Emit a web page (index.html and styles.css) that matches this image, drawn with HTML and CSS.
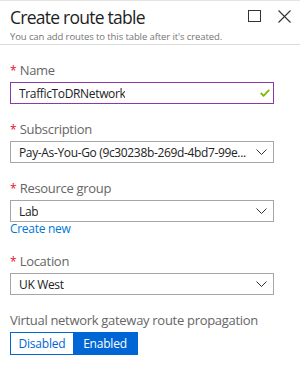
FILE: index.html
```html
<!DOCTYPE html>
<html lang="en">
<head>
  <meta charset="UTF-8">
  <meta name="viewport" content="width=device-width, initial-scale=1.0">
  <title>Create route table</title>
  <link rel="stylesheet" href="styles.css">
</head>
<body>
  <div class="blade">
    <div class="header">
      <div class="titles">
        <h2>Create route table</h2>
        <div class="subtitle">You can add routes to this table after it's created.</div>
      </div>
      <div class="actions">
        <svg width="13" height="12" viewBox="0 0 13 12"><rect x="0.5" y="0.5" width="12" height="11" fill="none" stroke="#333" stroke-width="1"/></svg>
        <svg width="13" height="13" viewBox="0 0 13 13"><path d="M0.5 0.5 L12.5 12.5 M12.5 0.5 L0.5 12.5" stroke="#333" stroke-width="1.1" fill="none"/></svg>
      </div>
    </div>

    <div class="form">
      <div class="field">
        <label><span class="req">*</span> Name</label>
        <div class="box active">
          <span class="val">TrafficToDRNetwork</span>
          <svg class="check" width="10" height="8" viewBox="0 0 10 8"><path d="M0.8 4 L3.6 6.8 L9.2 0.8" stroke="#7fba00" stroke-width="1.8" fill="none"/></svg>
        </div>
      </div>

      <div class="field">
        <label><span class="req">*</span> Subscription</label>
        <div class="box">
          <span class="val">Pay-As-You-Go (9c30238b-269d-4bd7-99e...</span>
          <svg class="chev" width="11" height="6" viewBox="0 0 11 6"><path d="M0.5 0.5 L5.5 5.5 L10.5 0.5" stroke="#333" stroke-width="1" fill="none"/></svg>
        </div>
      </div>

      <div class="field">
        <label><span class="req">*</span> Resource group</label>
        <div class="box">
          <span class="val">Lab</span>
          <svg class="chev" width="11" height="6" viewBox="0 0 11 6"><path d="M0.5 0.5 L5.5 5.5 L10.5 0.5" stroke="#333" stroke-width="1" fill="none"/></svg>
        </div>
        <a class="link" href="#">Create new</a>
      </div>

      <div class="field">
        <label><span class="req">*</span> Location</label>
        <div class="box">
          <span class="val">UK West</span>
          <svg class="chev" width="11" height="6" viewBox="0 0 11 6"><path d="M0.5 0.5 L5.5 5.5 L10.5 0.5" stroke="#333" stroke-width="1" fill="none"/></svg>
        </div>
      </div>

      <div class="field">
        <label>Virtual network gateway route propagation</label>
        <div class="toggle">
          <span class="opt">Disabled</span>
          <span class="opt on">Enabled</span>
        </div>
      </div>
    </div>
  </div>
</body>
</html>
```

FILE: styles.css
```css
body { margin: 0; font-family: "Open Sans", "Noto Sans", sans-serif; color: #222; background: #fff; }
.blade { width: 300px; border-top: 1px solid #e4e4e4; }
.header { display: flex; justify-content: space-between; border-bottom: 1px solid #dcdcdc; padding: 0 9px 0 10px; height: 43px; }
h2 { font-size: 17.5px; font-weight: 400; margin: 6px 0 0; line-height: 21px; color: #1e1e1e; letter-spacing: -0.75px; }
.subtitle { font-size: 9.5px; color: #757575; line-height: 13px; margin-top: 2px; letter-spacing: -0.1px; }
.actions { display: flex; gap: 17px; padding-top: 9px; }
.form { padding: 17px 26px 0 10px; }
.field { margin-bottom: 17px; }
label { display: block; font-size: 13px; color: #666; line-height: 16px; margin-bottom: 3px; letter-spacing: -0.3px; }
.req { color: #e81123; font-size: 12px; letter-spacing: 0; }
.box { display: flex; align-items: center; justify-content: space-between; height: 20px; border: 1px solid #a6a6a6; padding: 0 6px 0 8px; font-size: 12px; color: #222; }
.box.active { border-color: #8a3aa8; }
.check { margin-right: -3px; }
.val { white-space: nowrap; overflow: hidden; letter-spacing: -0.35px; }
.link { display: block; font-size: 12px; color: #0078d4; text-decoration: none; line-height: 14px; letter-spacing: -0.3px; }
.toggle { display: inline-flex; border: 1px solid #0066d6; height: 21px; }
.opt { display: flex; align-items: center; justify-content: center; font-size: 12px; color: #0066d6; width: 62px; letter-spacing: -0.2px; }
.opt.on { background: #0066d6; color: #fff; width: 64px; }
```
